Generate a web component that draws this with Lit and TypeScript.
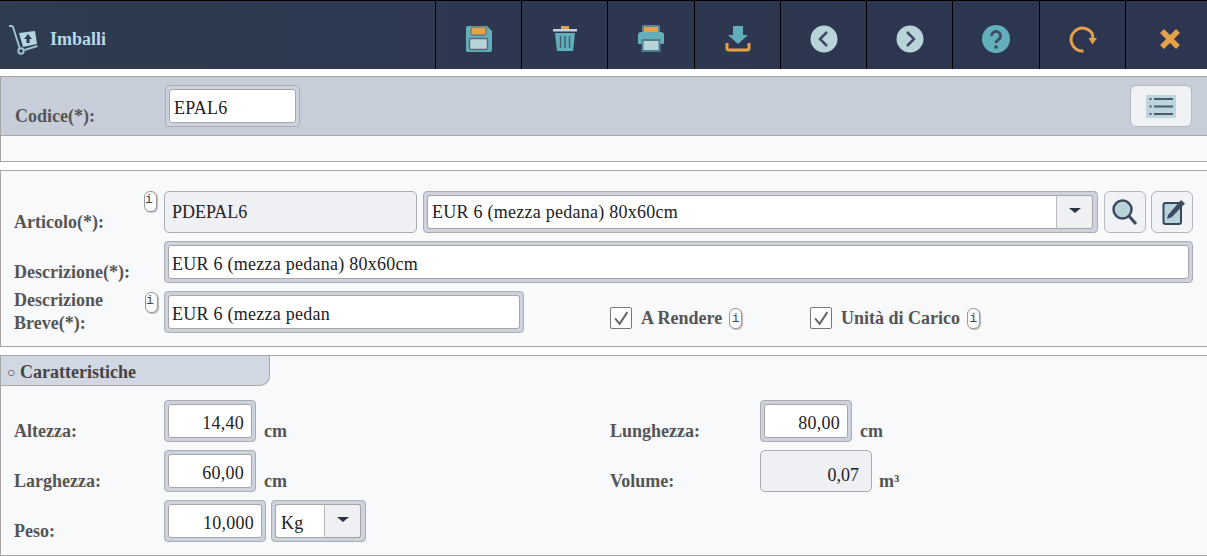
import { LitElement, html, css, svg } from 'lit';
import { customElement } from 'lit/decorators.js';

const ORANGE = '#e3a24a';
const TEAL = '#63aebb';
const PALE = '#b8d4d9';
const DARK = '#3f4a62';

const toolbar = [
  { w: 86, s: svg`<path d="M1 3a2 2 0 0 1 2-2h19l5 5v19a2 2 0 0 1-2 2H3a2 2 0 0 1-2-2z" fill="${TEAL}"/><rect x="6" y="2" width="15" height="8" rx="1" fill="${ORANGE}" stroke="#5a6a78"/><rect x="4.500" y="13.500" width="18" height="11" rx="1" fill="${PALE}" stroke="#5a6a78" stroke-width="1.500"/>` },
  { w: 86, s: svg`<rect x="10" y="1" width="8" height="3" fill="${ORANGE}"/><rect x="2" y="4" width="24" height="2.500" fill="#c4d4da"/><path d="M4 8h20l-2 18H6z" fill="${TEAL}"/><path d="M9.500 11v12M14 11v12M18.500 11v12" stroke="#3d6373" stroke-width="1.500"/>` },
  { w: 87, s: svg`<rect x="6" y="1" width="16" height="9" rx="1" fill="${ORANGE}" stroke="#5a8a98" stroke-width="2"/><path d="M4 7h20a3 3 0 0 1 3 2v9a1 1 0 0 1-1 1H2a1 1 0 0 1-1-1V9a3 3 0 0 1 3-2z" fill="${TEAL}"/><rect x="5.500" y="15" width="17" height="11" fill="${PALE}" stroke="#4f7f8e" stroke-width="2"/>` },
  { w: 86, s: svg`<path d="M9 1h10v9h5L14 19 4 10h5z" fill="${TEAL}"/><path d="M3 18v5a2 2 0 0 0 2 2h18a2 2 0 0 0 2-2v-5" fill="none" stroke="${ORANGE}" stroke-width="3"/>` },
  { w: 86, s: svg`<circle cx="14" cy="14" r="13.500" fill="${PALE}"/><path d="M17 7l-7 7 7 7" fill="none" stroke="${DARK}" stroke-width="2.500"/>` },
  { w: 86, s: svg`<circle cx="14" cy="14" r="13.500" fill="${PALE}"/><path d="M11 7l7 7-7 7" fill="none" stroke="${DARK}" stroke-width="2.500"/>` },
  { w: 87, s: svg`<circle cx="14" cy="14" r="14" fill="${TEAL}"/><path d="M9.500 11a4.500 4.500 0 1 1 7 3.700c-1.500 1-2.500 1.800-2.500 3.300" fill="none" stroke="${DARK}" stroke-width="2.800"/><circle cx="14" cy="22" r="1.800" fill="${DARK}"/>` },
  { w: 86, s: svg`<path d="M14.500 26A11.500 11.500 0 1 1 23 8l1 5" fill="none" stroke="${ORANGE}" stroke-width="3"/><path d="M19.500 13h8.500l-4.500 6.500z" fill="${ORANGE}"/>` },
  { w: 82, s: svg`<path d="M6 6l16 16M22 6L6 22" stroke="${ORANGE}" stroke-width="5.500"/>` },
];

@customElement('app-root')
export class AppRoot extends LitElement {
  static styles = css`
    :host {
      display: block;
      background: #fff;
      font-family: "Liberation Serif", "Times New Roman", serif;
      font-size: 18px;
      color: #555;
    }
    .header {
      display: flex;
      height: 68px;
      border-top: 1px solid #000;
      background: linear-gradient(90deg, #2e3b50, #2d3550);
      margin-bottom: 7px;
    }
    .brand {
      width: 435px;
      box-sizing: border-box;
      display: flex;
      align-items: center;
      gap: 12px;
      padding: 9px 0 0 8px;
      color: #b8d8e8;
      font-weight: bold;
      font-size: 18px;
    }
    .tool {
      box-sizing: border-box;
      border-left: 1px solid #000;
      display: flex;
      align-items: center;
      justify-content: center;
      padding-top: 8px;
    }
    .tool:last-child { padding-left: 6px; }
    .panel {
      border: 1px solid #a6a6a6;
      border-right: none;
      background: #f8f9fb;
      margin-bottom: 8px;
    }
    .code-bar {
      height: 59px;
      box-sizing: border-box;
      background: #c8ced9;
      border-bottom: 1px solid #a6a6a6;
      display: flex;
      align-items: flex-start;
      padding: 8px 15px 0 0;
    }
    .code-bar .label { padding-left: 14px; height: 42px; }
    .spacer { flex: 1; }
    .strip { height: 25px; }
    .label {
      box-sizing: border-box;
      width: 163px;
      padding-left: 13px;
      font-weight: bold;
      font-size: 18px;
      line-height: 23px;
      display: flex;
      align-items: flex-end;
      color: #555;
      flex: none;
      position: relative;
    }
    .label span { display: block; margin-bottom: -1px; }
    .label span.two { margin-bottom: -2px; }
    .rows { display: flex; flex-direction: column; gap: 8px; padding: 20px 13px 13px 0; }
    .row { display: flex; height: 42px; }
    .field {
      box-sizing: border-box;
      height: 42px;
      border: 1px solid #a9acb3;
      border-radius: 4px;
      background: #cdd2dd;
      padding: 3px;
      display: flex;
      flex: none;
    }
    .field input {
      box-sizing: border-box;
      width: 100%;
      min-width: 0;
      height: 100%;
      border: 1px solid #a6a6a6;
      border-radius: 3px;
      padding: 4px 4px 0 4px;
      background: #fff;
      font: 18px "Liberation Serif", "Times New Roman", serif;
      letter-spacing: 0.25px;
      color: #222;
      outline: none;
    }
    .num input { text-align: right; padding-right: 7px; }
    .text input { padding-left: 3px; }
    .code { width: 135px; margin-left: 1px; }
    .code input { padding-left: 4px; }
    .disabled {
      background: #eff0f4;
      border-radius: 5px;
      box-sizing: border-box;
      height: 42px;
      border: 1px solid #a9acb3;
      color: #222;
      font-size: 18px;
      display: flex;
      align-items: center;
      flex: none;
      padding: 0 7px;
    }
    .disabled.value { width: 112px; justify-content: flex-end; padding: 8px 12px 0 7px; }
    .combo { padding-right: 4px; }
    .combo input {
      border-radius: 3px 0 0 3px;
      border-right: none;
      flex: 1;
      width: auto;
      padding-top: 0;
    }
    .arrow {
      flex: none;
      box-sizing: border-box;
      width: 37px;
      height: 100%;
      background: #eff0f4;
      border: 1px solid #a6a6a6;
      border-left: 1px solid #b8b8b8;
      border-radius: 0 3px 3px 0;
      display: flex;
      align-items: center;
      justify-content: center;
    }
    .arrow i {
      display: block;
      width: 0;
      border-left: 6px solid transparent;
      border-right: 6px solid transparent;
      border-top: 5px solid #2c3444;
      margin-bottom: 3px;
    }
    .square {
      box-sizing: border-box;
      width: 42px;
      height: 42px;
      border: 1px solid #b4b7be;
      border-radius: 6px;
      background: #f0f2f6;
      display: flex;
      align-items: center;
      justify-content: center;
      flex: none;
    }
    .menu-btn { width: 62px; background: #eff1f5; }
    .info {
      position: absolute;
      box-sizing: border-box;
      width: 13px;
      height: 21px;
      border: 1px solid #999;
      border-radius: 6px;
      background: #fbfbfb;
      box-shadow: 1px 1px 1px #bbb;
      font: 13px "Liberation Mono", monospace;
      color: #444;
      display: flex;
      align-items: center;
      justify-content: center;
      flex: none;
    }
    .label .info { left: 143px; top: 0; }
    .label .info.low { left: 144px; top: 1px; }
    .check-row { display: flex; align-items: center; font-weight: bold; font-size: 18px; }
    .check {
      box-sizing: border-box;
      width: 22px;
      height: 22px;
      border: 1px solid #777;
      border-radius: 2px;
      background: #fff;
      margin-right: 9px;
      display: block;
    }
    .inline-info { position: static; margin-left: 7px; }
    .checks { display: flex; margin-left: 86px; padding-top: 14px; height: 26px; }
    .checks .a { width: 200px; }
    .tab {
      width: 269px;
      height: 30px;
      box-sizing: border-box;
      background: #d2d8e3;
      border-right: 1px solid #a6a6a6;
      border-bottom: 1px solid #a6a6a6;
      border-radius: 0 0 10px 0;
      padding-left: 6px;
      font-weight: bold;
      font-size: 18px;
      line-height: 32px;
      color: #444;
    }
    .tab small { font-size: 14px; font-weight: normal; position: relative; top: -1px; }
    .chars {
      display: grid;
      grid-template-columns: 609px 1fr;
      row-gap: 8px;
      padding: 14px 0 13px 0;
    }
    .cell { display: flex; height: 42px; }
    .right .label { width: 150px; padding-left: 0; }
    .unit {
      font-weight: bold;
      font-size: 18px;
      align-self: flex-end;
      margin-left: 8px;
      line-height: 23px;
      margin-bottom: -1px;
    }
    .cube { margin-left: 7px; }
    .w92 { width: 92px; }
    .w102 { width: 102px; margin-right: 5px; }
    .w95 { width: 95px; }
    .w95 input { padding: 4px 4px 0 5px; }
    .last { margin-bottom: 0; }
  `;

  private info(low = false) {
    return html`<span class="info ${low ? 'low' : ''}">i</span>`;
  }

  private check() {
    return html`<svg class="check" viewBox="0 0 22 22"><path d="M4.500 11.500l5 6 8.500-13" fill="none" stroke="#666" stroke-width="2.200"/></svg>`;
  }

  render() {
    return html`
      <div class="header">
        <div class="brand">
          <svg width="30" height="32" viewBox="0 0 30 32">
            <path d="M1 2h3l1 1 7 22" fill="none" stroke="#9cc0cc" stroke-width="2"/>
            <circle cx="13" cy="27" r="2.700" fill="none" stroke="#9cc0cc" stroke-width="2"/>
            <path d="M16.500 26l13-4" stroke="#9cc0cc" stroke-width="2"/>
            <path d="M11 9l16-2 2 13-14 3z" fill="#b5d6e0"/>
            <path d="M20 10l4 5h-2.500v4h-3v-4H16z" fill="#2e3b50"/>
          </svg>
          Imballi
        </div>
        ${toolbar.map(
          (t) => html`<div class="tool" style="width:${t.w}px">
            <svg width="28" height="28" viewBox="0 0 28 28">${t.s}</svg>
          </div>`
        )}
      </div>

      <div class="panel">
        <div class="code-bar">
          <div class="label"><span>Codice(*):</span></div>
          <div class="field code"><input .value=${'EPAL6'} /></div>
          <div class="spacer"></div>
          <div class="square menu-btn">
            <svg width="30" height="23" viewBox="0 0 30 23">
              <rect width="30" height="23" fill="#bcd6dc"/>
              <path d="M8 4h19M8 11.500h19M8 19h19" stroke="#4a5a70" stroke-width="2"/>
              <path d="M3.500 4h2M3.500 11.500h2M3.500 19h2" stroke="#4a5a70" stroke-width="2"/>
            </svg>
          </div>
        </div>
        <div class="strip"></div>
      </div>

      <div class="panel">
        <div class="rows">
          <div class="row">
            <div class="label"><span>Articolo(*):</span>${this.info()}</div>
            <div class="disabled" style="width:253px">PDEPAL6</div>
            <div class="field combo" style="width:675px;margin-left:6px">
              <input .value=${'EUR 6 (mezza pedana) 80x60cm'} />
              <div class="arrow"><i></i></div>
            </div>
            <div class="square" style="margin-left:6px">
              <svg width="30" height="30" viewBox="0 0 30 30">
                <circle cx="12.500" cy="12.500" r="9" fill="${PALE}" stroke="${DARK}" stroke-width="2.500"/>
                <path d="M19 19l7 8" stroke="${DARK}" stroke-width="3"/>
              </svg>
            </div>
            <div class="square" style="margin-left:5px">
              <svg width="30" height="30" viewBox="0 0 30 30">
                <rect x="6.500" y="6" width="17.500" height="21" rx="2" fill="${PALE}" stroke="#33475e" stroke-width="2"/>
                <path d="M11 18L24 3l4 3.500L15 20l-5 2z" fill="${DARK}"/>
              </svg>
            </div>
          </div>
          <div class="row">
            <div class="label"><span>Descrizione(*):</span></div>
            <div class="field text" style="width:1029px"><input .value=${'EUR 6 (mezza pedana) 80x60cm'} /></div>
          </div>
          <div class="row">
            <div class="label"><span class="two">Descrizione<br />Breve(*):</span>${this.info(true)}</div>
            <div class="field text" style="width:360px"><input .value=${'EUR 6 (mezza pedan'} /></div>
            <div class="checks">
              <div class="check-row a">${this.check()}A Rendere<span class="info inline-info">i</span></div>
              <div class="check-row">${this.check()}Unità di Carico<span class="info inline-info">i</span></div>
            </div>
          </div>
        </div>
      </div>

      <div class="panel last">
        <div class="tab"><small>○</small> Caratteristiche</div>
        <div class="chars">
          <div class="cell">
            <div class="label"><span>Altezza:</span></div>
            <div class="field num w92"><input .value=${'14,40'} /></div>
            <div class="unit">cm</div>
          </div>
          <div class="cell right">
            <div class="label"><span>Lunghezza:</span></div>
            <div class="field num w92"><input .value=${'80,00'} /></div>
            <div class="unit">cm</div>
          </div>
          <div class="cell">
            <div class="label"><span>Larghezza:</span></div>
            <div class="field num w92"><input .value=${'60,00'} /></div>
            <div class="unit">cm</div>
          </div>
          <div class="cell right">
            <div class="label"><span>Volume:</span></div>
            <div class="disabled value">0,07</div>
            <div class="unit cube">m³</div>
          </div>
          <div class="cell">
            <div class="label"><span>Peso:</span></div>
            <div class="field num w102"><input .value=${'10,000'} /></div>
            <div class="field combo w95"><input .value=${'Kg'} /><div class="arrow"><i></i></div></div>
          </div>
        </div>
      </div>
    `;
  }
}
